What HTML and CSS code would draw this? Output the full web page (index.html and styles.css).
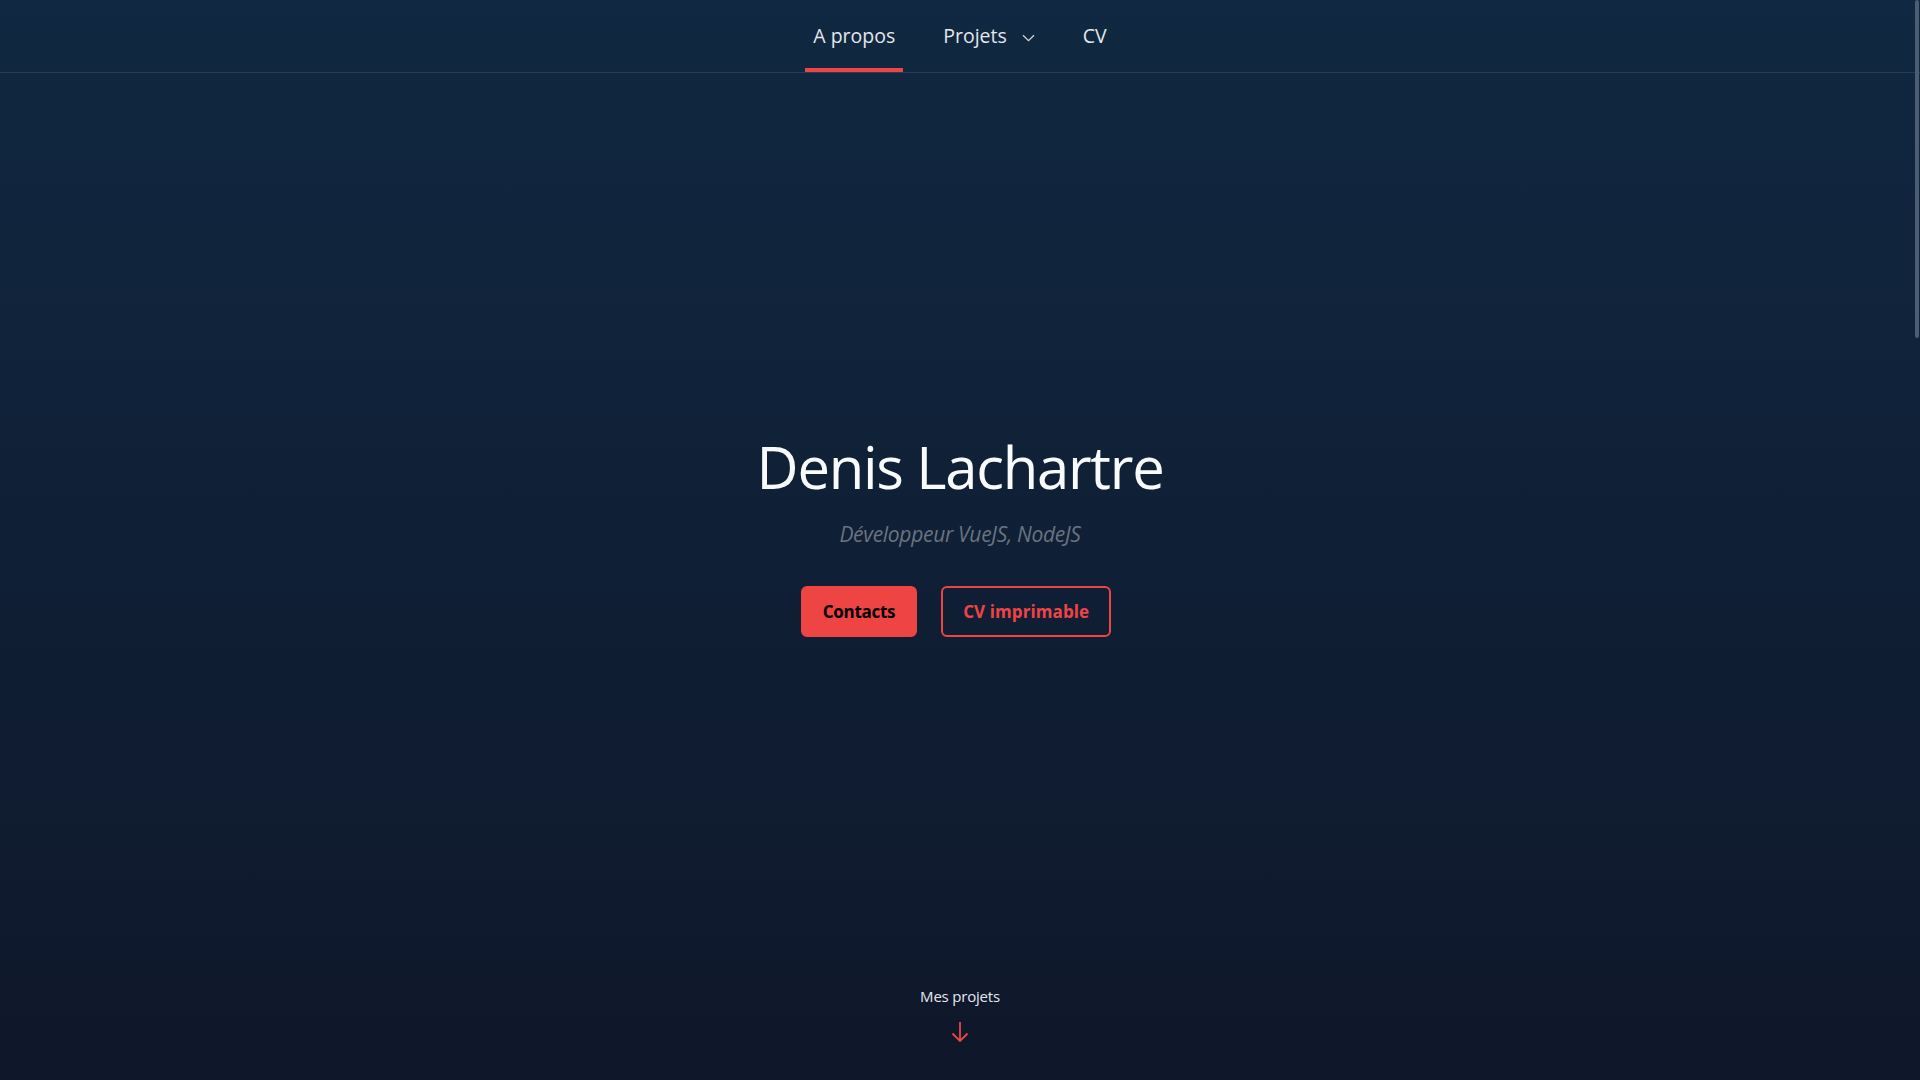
FILE: index.html
```html
<!DOCTYPE html>
<html lang="fr">
<head>
<meta charset="utf-8">
<title>Denis Lachartre</title>
<link rel="stylesheet" href="styles.css">
</head>
<body>
<div class="page">
  <header class="nav">
    <ul class="nav-list">
      <li class="nav-item active">A propos</li>
      <li class="nav-item">Projets
        <svg class="chev" width="13" height="8" viewBox="0 0 13 8"><path d="M1 1.2 L6.5 6.6 L12 1.2" fill="none" stroke="#d1d5db" stroke-width="1.3"/></svg>
      </li>
      <li class="nav-item">CV</li>
    </ul>
  </header>
  <main class="hero">
    <div class="hero-inner">
      <h1 class="name">Denis Lachartre</h1>
      <p class="role">Développeur VueJS, NodeJS</p>
      <div class="actions">
        <a class="btn btn-solid">Contacts</a>
        <a class="btn btn-outline">CV imprimable</a>
      </div>
    </div>
  </main>
  <div class="more">
    <span class="more-label">Mes projets</span>
    <svg class="arrow" width="18" height="22" viewBox="0 0 18 22"><path d="M9 1 V20 M1.5 12.5 L9 20 L16.5 12.5" fill="none" stroke="#ef4444" stroke-width="1.8"/></svg>
  </div>
</div>
<div class="scroll-thumb"></div>
</body>
</html>
```
FILE: styles.css
```css
html, body {
  margin: 0;
  padding: 0;
  height: 100%;
  overflow: hidden;
}
body {
  font-family: "Open Sans", "Noto Sans", sans-serif;
  background: linear-gradient(to bottom, #102841 0%, #0f172a 100%);
  color: #e5e7eb;
}
.page {
  height: 100vh;
  display: flex;
  flex-direction: column;
}
.nav {
  height: 72px;
  border-bottom: 1px solid #263b55;
  display: flex;
  justify-content: center;
}
.nav-list {
  list-style: none;
  margin: 0;
  padding: 0;
  display: flex;
  gap: 32px;
  height: 100%;
}
.nav-item {
  display: flex;
  align-items: center;
  padding: 0 8px;
  font-size: 19.5px;
  letter-spacing: 0;
  color: #e5e7eb;
  border-bottom: 4px solid transparent;
  box-sizing: border-box;
  padding-top: 3px;
}
.nav-item.active {
  border-bottom-color: #ef4444;
}
.chev {
  margin-left: 15px;
  margin-top: 4px;
}
.hero {
  flex: 1;
  display: flex;
  align-items: center;
  justify-content: center;
}
.hero-inner {
  display: flex;
  flex-direction: column;
  align-items: center;
  margin-top: 20px;
}
.name {
  margin: 0;
  font-size: 58px;
  font-weight: 400;
  line-height: 72px;
  letter-spacing: -1.3px;
  color: #f9fafb;
}
.role {
  margin: 17px 0 0;
  font-size: 21px;
  font-style: italic;
  color: #6b7280;
  letter-spacing: -0.3px;
  line-height: 28px;
}
.actions {
  margin-top: 38px;
  margin-right: 8px;
  display: flex;
  gap: 24px;
}
.btn {
  box-sizing: border-box;
  height: 51px;
  display: flex;
  align-items: center;
  padding: 0 20px;
  border-radius: 6px;
  font-size: 17px;
  font-weight: 700;
  border: 2px solid #ef4444;
  letter-spacing: -0.3px;
}
.btn-solid {
  background: #ef4444;
  color: #000;
}
.btn-outline {
  color: #ef4444;
  letter-spacing: 0.1px;
}
.more {
  box-sizing: border-box;
  height: 105px;
  padding-top: 11px;
  display: flex;
  flex-direction: column;
  align-items: center;
}
.more-label {
  font-size: 15px;
  color: #e5e7eb;
  letter-spacing: -0.2px;
  line-height: 20px;
}
.arrow {
  margin-top: 15px;
}
.scroll-thumb {
  position: fixed;
  right: 1px;
  top: 0;
  width: 4px;
  height: 338px;
  border-radius: 2px;
  background: #4a5d73;
}
```
